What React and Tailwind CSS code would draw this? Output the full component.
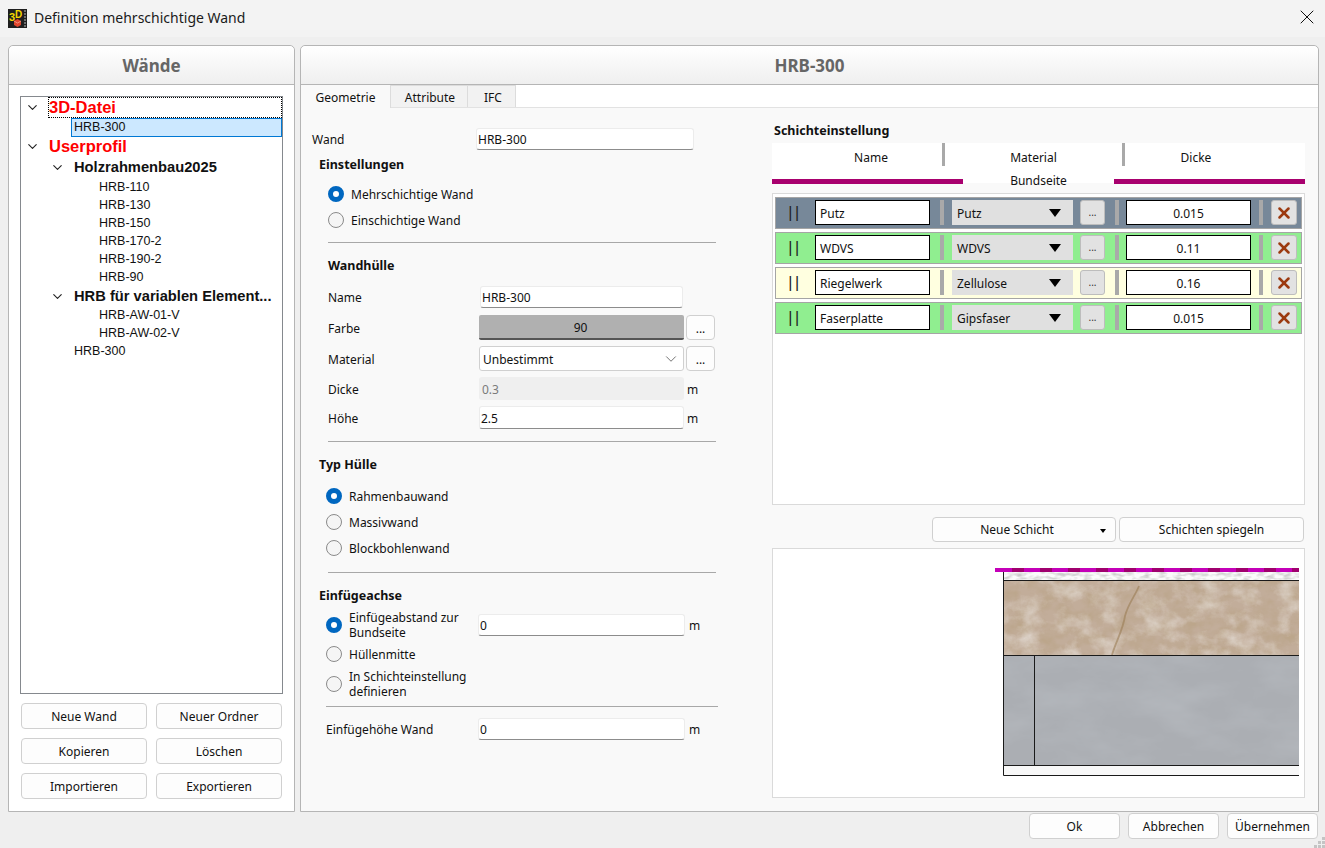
import { ChevronDown, X } from "lucide-react";

const ui = "font-['Noto_Sans','Open_Sans',sans-serif]";

const Radio = ({ checked }) =>
  checked ? (
    <span className="w-4 h-4 rounded-full border-[5px] border-[#0067c0] bg-white shrink-0" />
  ) : (
    <span className="w-4 h-4 rounded-full border border-[#8a8a8a] bg-[#f5f5f5] shrink-0" />
  );

const Input = ({ value, className = "" }) => (
  <div className={`flex items-center px-px pt-[2px] bg-white rounded-[3px] border border-[#ececec] border-b-[#8c8c8c] text-[12px] text-[#111] ${className}`}>
    {value}
  </div>
);

const Btn = ({ children, className = "", pad = "pt-[2px]" }) => (
  <button className={`flex items-center justify-center ${pad} bg-[#fdfdfd] rounded-[4px] border border-[#d0d0d0] text-[12px] text-[#111] ${className}`}>
    {children}
  </button>
);

const Divider = ({ className }) => <div className={`h-px bg-[#a8a8a8] ${className}`} />;

const Heading = ({ children, className = "" }) => (
  <div className={`h-[18px] flex items-center pt-[2px] text-[12.5px] font-bold text-[#111] ${className}`}>{children}</div>
);

const RadioRow = ({ checked, children, className = "" }) => (
  <div className={`h-[18px] flex items-center gap-[7px] text-[12px] text-[#111] ${className}`}>
    <Radio checked={checked} />
    <span className="pt-[2px]">{children}</span>
  </div>
);

const Leaf = ({ children, indent }) => (
  <div className={`h-[18px] flex items-center text-[12.5px] text-[#111] font-['Liberation_Sans',sans-serif] ${indent}`}>{children}</div>
);

const Chevron = () => <ChevronDown size={15} strokeWidth={1.8} className="text-[#222]" />;

const layers = [
  { name: "Putz", material: "Putz", thickness: "0.015", bg: "bg-[#778899]" },
  { name: "WDVS", material: "WDVS", thickness: "0.11", bg: "bg-[#90ee90]" },
  { name: "Riegelwerk", material: "Zellulose", thickness: "0.16", bg: "bg-[#ffffe0]" },
  { name: "Faserplatte", material: "Gipsfaser", thickness: "0.015", bg: "bg-[#90ee90]" },
];

const Sep = ({ className = "" }) => <div className={`w-1 h-[25px] bg-[#a9a9a9] shrink-0 ${className}`} />;

const LayerRow = ({ layer }) => (
  <div className={`h-8 flex pt-[2px] border border-[#a5a5a5] ${layer.bg}`}>
    <div className="w-[38px] mr-px h-[25px] flex items-center justify-center text-[16px] tracking-[2.6px] text-[#222] font-['Liberation_Sans',sans-serif] shrink-0">||</div>
    <div className="w-[115px] h-[25px] flex items-center pl-[4px] pt-[2px] bg-white border border-black text-[12px] text-[#111] shrink-0">{layer.name}</div>
    <Sep className="ml-[10px]" />
    <div className="ml-2 w-[121px] h-[25px] flex items-center pl-[5px] bg-[#e0e0e0] text-[12px] text-[#111] shrink-0">
      <span className="flex-1 pt-[2px]">{layer.material}</span>
      <span className="mr-3 w-0 h-0 border-x-[6px] border-x-transparent border-t-[8px] border-t-black" />
    </div>
    <button className="ml-[7px] w-[25px] h-[25px] flex items-center justify-center bg-[#e2e2e2] rounded-[3px] border border-[#bdbdbd] text-[10px] text-[#333] shrink-0">...</button>
    <Sep className="ml-[10px]" />
    <div className="ml-[7px] w-[125px] h-[25px] flex items-center justify-center pt-[2px] bg-white border border-black text-[12px] text-[#111] shrink-0">{layer.thickness}</div>
    <Sep className="ml-2" />
    <button className="ml-2 w-[26px] h-[25px] flex items-center justify-center bg-[#e2e2e2] rounded-[3px] border border-[#bdbdbd] shrink-0">
      <X size={18} strokeWidth={3.4} className="text-[#9c3a10]" />
    </button>
  </div>
);

const AppIcon = () => (
  <svg width="19" height="19" viewBox="0 0 19 19" className="shrink-0">
    <rect width="19" height="19" fill="#1f1f1f" />
    <path d="M16 2h2M16 5h2M16 8h2M16 11h2M16 14h2M16 17h2" stroke="#bdbdbd" strokeWidth="1.2" />
    <text x="1" y="12" fontSize="11" fontWeight="700" fontFamily="Liberation Sans" fill="#f5d800">3</text>
    <text x="7" y="9" fontSize="10" fontWeight="700" fontFamily="Liberation Sans" fill="#f5d800">D</text>
    <path d="M6 12l3.5-2 3.5 2v4l-3.5 2-3.5-2z" fill="#e0452c" />
    <path d="M6 12l3.5 2 3.5-2" stroke="#f5b0a0" strokeWidth="0.7" fill="none" />
  </svg>
);

const WallPreview = () => (
  <svg width="304" height="211" viewBox="995 566 304 211" className="ml-[222px] mt-[17px] block">
    <defs>
      <filter id="plaster" x="0" y="0" width="100%" height="100%">
        <feTurbulence type="fractalNoise" baseFrequency="0.12 0.3" numOctaves="2" seed="4" />
        <feColorMatrix values="0 0 0 0 0.6  0 0 0 0 0.6  0 0 0 0 0.6  2.4 0 0 0 -0.95" />
      </filter>
      <filter id="wool" x="0" y="0" width="100%" height="100%">
        <feTurbulence type="fractalNoise" baseFrequency="0.07 0.09" numOctaves="5" seed="11" />
        <feColorMatrix values="0 0 0 0 0.5  0 0 0 0 0.38  0 0 0 0 0.26  2 0 0 0 -0.65" />
      </filter>
      <filter id="woolLight" x="0" y="0" width="100%" height="100%">
        <feTurbulence type="fractalNoise" baseFrequency="0.05 0.06" numOctaves="5" seed="23" />
        <feColorMatrix values="0 0 0 0 0.82  0 0 0 0 0.78  0 0 0 0 0.74  1.3 0 0 0 -0.55" />
      </filter>
      <filter id="board" x="0" y="0" width="100%" height="100%">
        <feTurbulence type="fractalNoise" baseFrequency="0.015 0.035" numOctaves="4" seed="7" />
        <feColorMatrix values="0 0 0 0 0.45  0 0 0 0 0.47  0 0 0 0 0.5  2 0 0 0 -0.75" />
      </filter>
    </defs>
    <rect x="1003" y="572" width="296" height="8" fill="#fbfbfb" />
    <rect x="1003" y="572" width="296" height="8" filter="url(#plaster)" />
    <rect x="1003" y="581" width="296" height="74" fill="#c2ad9a" />
    <rect x="1003" y="581" width="296" height="74" filter="url(#wool)" />
    <rect x="1003" y="581" width="296" height="74" filter="url(#woolLight)" />
    <path d="M1139 586c-4 10-11 18-14 30c-2 14-9 25-13 39" stroke="#97784f" strokeWidth="1.8" fill="none" opacity="0.55" />
    <rect x="1003" y="656" width="296" height="109" fill="#abaeb3" />
    <rect x="1003" y="656" width="296" height="109" filter="url(#board)" />
    <rect x="1003" y="766" width="296" height="9" fill="#f8f8f8" />
    <path d="M1003.5 572v203.5H1299M1003 580.5h296M1003 655.5h296M1003 765.5h296M1034.5 656v109" stroke="#1a1a1a" strokeWidth="1" fill="none" />
    <path d="M995 570h304" stroke="#c400b8" strokeWidth="4" />
    <path d="M1012 570h287" stroke="#a0006e" strokeWidth="4" strokeDasharray="12 16" />
  </svg>
);

const SizeGrip = () => (
  <svg width="11" height="11" viewBox="0 0 11 11" className="absolute right-0 bottom-0" fill="#c4c4c4">
    <rect x="8" y="0" width="3" height="3" />
    <rect x="4" y="4" width="3" height="3" />
    <rect x="8" y="4" width="3" height="3" />
    <rect x="0" y="8" width="3" height="3" />
    <rect x="4" y="8" width="3" height="3" />
    <rect x="8" y="8" width="3" height="3" />
  </svg>
);

export default function App() {
  return (
    <div className={`relative w-[1325px] h-[848px] flex flex-col bg-[#efefef] overflow-hidden ${ui}`}>
      {/* title bar */}
      <div className="h-[37px] flex items-center pl-[8px] pr-[6px] bg-[#f3f3f3] shrink-0">
        <AppIcon />
        <span className="ml-[7px] mb-[2px] text-[14px] text-[#1a1a1a]">Definition mehrschichtige Wand</span>
        <X size={24} strokeWidth={1} className="ml-auto mb-[3px] text-[#111]" />
      </div>

      <div className="flex mt-2 ml-2 gap-[5px] h-[767px] shrink-0">
        {/* left panel */}
        <div className="w-[287px] flex flex-col bg-white border border-[#b5b5b5] rounded-t-[5px]">
          <div className="h-[39px] flex items-center justify-center pt-[2px] border-b border-[#b5b5b5] rounded-t-[5px] bg-gradient-to-b from-white to-[#efefef] text-[17px] font-bold text-[#666]">
            Wände
          </div>
          <div className="mt-[11px] ml-[11px] w-[263px] h-[598px] border border-[#85898e] bg-white pl-[3px] pt-0 font-['Liberation_Sans',sans-serif]">
            <div className="h-[21px] flex items-center pl-[1px]">
              <Chevron />
              <span className="ml-[8px] flex-1 h-[21px] flex items-center border border-dotted border-black text-[16.5px] font-bold text-[#ff0000]">3D-Datei</span>
            </div>
            <div className="ml-[47px] h-[19px] flex items-center pl-[2px] bg-[#cce8ff] border border-[#0078d4] text-[12.5px] text-[#111]">HRB-300</div>
            <div className="h-[20px] flex items-center pl-[1px] mt-[-1px]">
              <Chevron />
              <span className="ml-[9px] text-[16.5px] font-bold text-[#ff0000]">Userprofil</span>
            </div>
            <div className="h-[22px] flex items-center pl-[26px]">
              <Chevron />
              <span className="ml-[9px] text-[14.7px] font-bold text-[#111]">Holzrahmenbau2025</span>
            </div>
            {["HRB-110", "HRB-130", "HRB-150", "HRB-170-2", "HRB-190-2", "HRB-90"].map((n) => (
              <Leaf key={n} indent="pl-[75px]">{n}</Leaf>
            ))}
            <div className="h-[20px] flex items-center pl-[26px]">
              <Chevron />
              <span className="ml-[9px] text-[14.7px] font-bold text-[#111] whitespace-nowrap">HRB für variablen Element...</span>
            </div>
            <Leaf indent="pl-[75px]">HRB-AW-01-V</Leaf>
            <Leaf indent="pl-[75px]">HRB-AW-02-V</Leaf>
            <Leaf indent="pl-[50px]">HRB-300</Leaf>
          </div>
          <div className="mt-[9px] ml-3 grid grid-cols-[126px_126px] gap-x-[9px] gap-y-[9px]">
            <Btn className="h-[26px] border-[#0067c0]">Neue Wand</Btn>
            <Btn className="h-[26px]">Neuer Ordner</Btn>
            <Btn className="h-[26px]">Kopieren</Btn>
            <Btn className="h-[26px]">Löschen</Btn>
            <Btn className="h-[26px]">Importieren</Btn>
            <Btn className="h-[26px]">Exportieren</Btn>
          </div>
        </div>

        {/* right panel */}
        <div className="w-[1019px] flex flex-col bg-white border border-[#b5b5b5] rounded-t-[5px]">
          <div className="h-[39px] flex items-center justify-center pt-[2px] border-b border-[#b5b5b5] rounded-t-[5px] bg-gradient-to-b from-white to-[#efefef] text-[17px] font-bold text-[#666] shrink-0">
            HRB-300
          </div>
          <div className="h-[23px] flex items-end text-[12px] text-[#111] shrink-0 border-b border-[#e2e2e2]">
            <div className="w-[90px] h-[23px] mb-[-1px] flex items-center justify-center pt-[2px] bg-[#f9f9f9] border-r border-[#dcdcdc]">Geometrie</div>
            <div className="w-[77px] h-[22px] flex items-center justify-center pt-[2px] pl-[2px] bg-[#f2f2f2] border-r border-t border-[#dcdcdc]">Attribute</div>
            <div className="w-[48px] h-[22px] flex items-center justify-center pt-[2px] pl-[3px] bg-[#f2f2f2] border-r border-t border-[#dcdcdc]">IFC</div>
          </div>

          <div className="flex flex-1 bg-[#f9f9f9] text-[12px] text-[#111]">
            {/* form column */}
            <div className="w-[471px] shrink-0 pt-[20px]">
              <div className="h-[22px] flex items-center pl-[11px]">
                <span className="w-[164px] pt-[2px]">Wand</span>
                <Input value="HRB-300" className="w-[218px] h-[22px]" />
              </div>
              <Heading className="mt-[5px] pl-[18px]">Einstellungen</Heading>
              <RadioRow checked className="mt-[12px] pl-[27px]">Mehrschichtige Wand</RadioRow>
              <RadioRow className="mt-2 pl-[27px]">Einschichtige Wand</RadioRow>
              <Divider className="mt-[13px] ml-[27px] w-[388px]" />
              <Heading className="mt-[13px] pl-[27px]">Wandhülle</Heading>
              <div className="mt-[12px] h-[22px] flex items-center pl-[27px]">
                <span className="w-[152px] pt-[2px]">Name</span>
                <Input value="HRB-300" className="w-[203px] h-[22px]" />
              </div>
              <div className="mt-[7px] h-[25px] flex items-center pl-[27px]">
                <span className="w-[151px] pt-[2px]">Farbe</span>
                <div className="w-[205px] h-[25px] flex items-center justify-center pt-[2px] pr-[2px] bg-[#b0b0b0] border-b-2 border-[#555] rounded-[2px]">90</div>
                <Btn className="ml-[2px] w-[29px] h-[25px]">...</Btn>
              </div>
              <div className="mt-[6px] h-[25px] flex items-center pl-[27px]">
                <span className="w-[151px] pt-[2px]">Material</span>
                <div className="w-[205px] h-[25px] flex items-center pl-[3px] pr-[3px] bg-white border border-[#d0d0d0] rounded-[3px]">
                  <span className="flex-1 pt-[2px]">Unbestimmt</span>
                  <ChevronDown size={18} strokeWidth={1} className="text-[#444]" />
                </div>
                <Btn className="ml-[2px] w-[29px] h-[25px]">...</Btn>
              </div>
              <div className="mt-[6px] h-[23px] flex items-center pl-[27px]">
                <span className="w-[151px] pt-[2px]">Dicke</span>
                <div className="w-[205px] h-[23px] flex items-center px-[3px] pt-[2px] bg-[#efefef] rounded-[3px] text-[#7a7a7a]">0.3</div>
                <span className="ml-[3px] pt-[2px]">m</span>
              </div>
              <div className="mt-[6px] h-[23px] flex items-center pl-[27px]">
                <span className="w-[151px] pt-[2px]">Höhe</span>
                <Input value="2.5" className="w-[205px] h-[23px]" />
                <span className="ml-[3px] pt-[2px]">m</span>
              </div>
              <Divider className="mt-[12px] ml-[27px] w-[388px]" />
              <Heading className="mt-[13px] pl-[18px]">Typ Hülle</Heading>
              <RadioRow checked className="mt-[14px] pl-[25px]">Rahmenbauwand</RadioRow>
              <RadioRow className="mt-2 pl-[25px]">Massivwand</RadioRow>
              <RadioRow className="mt-2 pl-[25px]">Blockbohlenwand</RadioRow>
              <Divider className="mt-[15px] ml-[27px] w-[388px]" />
              <Heading className="mt-[13px] pl-[18px]">Einfügeachse</Heading>
              <div className="mt-[6px] h-[30px] flex items-center pl-[25px]">
                <Radio checked />
                <span className="ml-[7px] w-[129px] leading-[15px]">Einfügeabstand zur Bundseite</span>
                <Input value="0" className="w-[207px] h-[22px]" />
                <span className="ml-1 pt-[2px]">m</span>
              </div>
              <RadioRow className="mt-[5px] pl-[25px]">Hüllenmitte</RadioRow>
              <div className="mt-[5px] h-[31px] flex items-center pl-[25px]">
                <Radio />
                <span className="ml-[7px] w-[129px] leading-[15px]">In Schichteinstellung definieren</span>
              </div>
              <Divider className="mt-[7px] ml-[25px] w-[392px]" />
              <div className="mt-[11px] h-[22px] flex items-center pl-[25px]">
                <span className="w-[152px] pt-[2px]">Einfügehöhe Wand</span>
                <Input value="0" className="w-[207px] h-[22px]" />
                <span className="ml-1 pt-[2px]">m</span>
              </div>
            </div>

            {/* layers column */}
            <div className="w-[533px] shrink-0 pt-[13px]">
              <Heading className="pl-[2px]">Schichteinstellung</Heading>
              <div className="mt-1 h-10 bg-white flex flex-col">
                <div className="h-[23px] flex items-center">
                  <div className="w-[170px] pl-[28px] pt-[7px] text-center">Name</div>
                  <div className="w-[3px] h-[23px] bg-[#a9a9a9]" />
                  <div className="w-[177px] pt-[7px] text-center">Material</div>
                  <div className="w-[3px] h-[23px] bg-[#a9a9a9]" />
                  <div className="w-[142px] pt-[7px] text-center">Dicke</div>
                </div>
                <div className="mt-[6px] h-[18px] flex items-center">
                  <div className="w-[191px] h-[5px] bg-[#a8006e]" />
                  <div className="flex-1 text-center">Bundseite</div>
                  <div className="w-[191px] h-[5px] bg-[#a8006e]" />
                </div>
              </div>
              <div className="mt-[10px] h-[312px] flex flex-col gap-[3px] bg-white border border-[#dadada] pt-[3px] px-[2px]">
                {layers.map((l) => (
                  <LayerRow key={l.name} layer={l} />
                ))}
              </div>
              <div className="mt-3 flex justify-end gap-[3px] pr-[1px]">
                <Btn pad="pt-0" className="relative w-[184px] h-[25px] pr-[14px]">
                  Neue Schicht
                  <span className="absolute right-[9px] top-[11px] w-0 h-0 border-x-[3.5px] border-x-transparent border-t-[4px] border-t-black" />
                </Btn>
                <Btn pad="pt-0" className="w-[185px] h-[25px]">Schichten spiegeln</Btn>
              </div>
              <div className="mt-[6px] h-[250px] bg-white border border-[#dadada] overflow-hidden">
                <WallPreview />
              </div>
            </div>
          </div>
        </div>
      </div>

      {/* footer */}
      <div className="flex justify-end gap-2 pr-[7px] mt-[1px]">
        <Btn className="w-[91px] h-[26px]">Ok</Btn>
        <Btn className="w-[91px] h-[26px]">Abbrechen</Btn>
        <Btn className="w-[91px] h-[26px]">Übernehmen</Btn>
      </div>
      <SizeGrip />
    </div>
  );
}
